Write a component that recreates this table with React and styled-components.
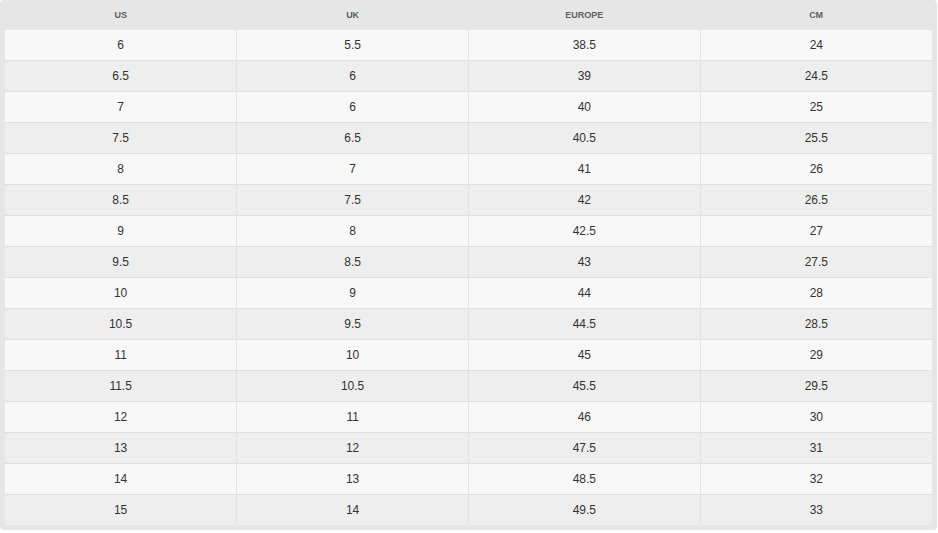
import React from 'react'
import styled, { createGlobalStyle } from 'styled-components'

const Global = createGlobalStyle`
  body {
    margin: 0;
    background: #ffffff;
    font-family: "Liberation Sans", Arial, sans-serif;
  }
`

const Frame = styled.div`
  width: 937px;
  box-sizing: border-box;
  background: #e6e6e6;
  border-radius: 4px;
  padding: 0 5px 5px 5px;
`

const Table = styled.table`
  width: 100%;
  border-collapse: collapse;
  table-layout: fixed;
`

const Head = styled.th`
  height: 30px;
  padding: 0;
  font-size: 9px;
  font-weight: bold;
  color: #5f5f5f;
  text-transform: uppercase;
  text-align: center;
  vertical-align: middle;
`

const Row = styled.tr`
  background: ${p => (p.$odd ? '#eeeeee' : '#f8f8f8')};
  border-top: ${p => (p.$first ? 'none' : '1px solid #e0e0e0')};
`

const Cell = styled.td`
  height: 30px;
  padding: 0;
  font-size: 12px;
  color: #333333;
  text-align: center;
  vertical-align: middle;
  border-left: 1px solid #e3e3e3;

  &:first-child {
    border-left: none;
  }
`

const headers = ['US', 'UK', 'Europe', 'CM']

const sizes = [
  ['6', '5.5', '38.5', '24'],
  ['6.5', '6', '39', '24.5'],
  ['7', '6', '40', '25'],
  ['7.5', '6.5', '40.5', '25.5'],
  ['8', '7', '41', '26'],
  ['8.5', '7.5', '42', '26.5'],
  ['9', '8', '42.5', '27'],
  ['9.5', '8.5', '43', '27.5'],
  ['10', '9', '44', '28'],
  ['10.5', '9.5', '44.5', '28.5'],
  ['11', '10', '45', '29'],
  ['11.5', '10.5', '45.5', '29.5'],
  ['12', '11', '46', '30'],
  ['13', '12', '47.5', '31'],
  ['14', '13', '48.5', '32'],
  ['15', '14', '49.5', '33'],
]

export default function App() {
  return (
    <>
      <Global />
      <Frame>
        <Table>
          <thead>
            <tr>
              {headers.map(h => <Head key={h}>{h}</Head>)}
            </tr>
          </thead>
          <tbody>
            {sizes.map((row, i) => (
              <Row key={i} $odd={i % 2 === 1} $first={i === 0}>
                {row.map((v, j) => <Cell key={j}>{v}</Cell>)}
              </Row>
            ))}
          </tbody>
        </Table>
      </Frame>
    </>
  )
}
